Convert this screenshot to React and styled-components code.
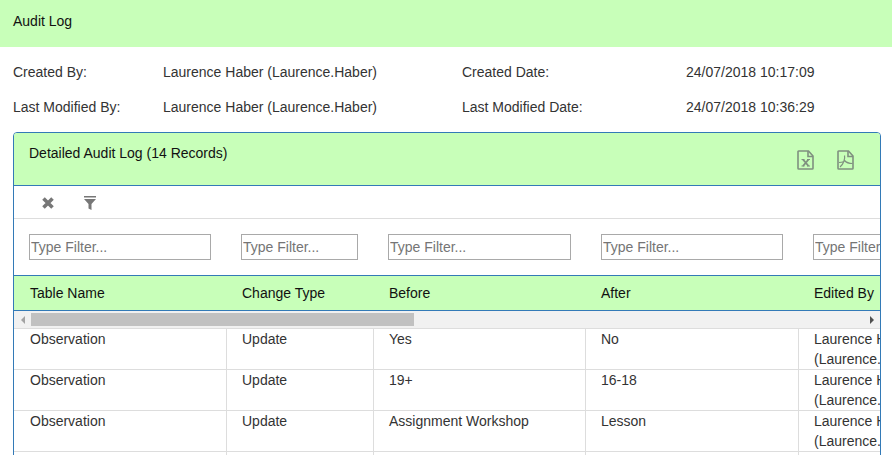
import React from 'react';
import styled, { createGlobalStyle } from 'styled-components';

const GREEN = '#c8ffb9';
const BLUE = '#337ab7';

const GlobalStyle = createGlobalStyle`
  html, body {
    margin: 0;
    padding: 0;
    background: #fff;
    font-family: "Liberation Sans", Arial, sans-serif;
    font-size: 14px;
    color: #333;
  }
`;

const Page = styled.div`
  height: 455px;
  overflow: hidden;
`;

const TopBar = styled.div`
  height: 47px;
  padding: 13px 13px 0;
  box-sizing: border-box;
  background: ${GREEN};
  color: #111;
  line-height: 16px;
`;

const InfoGrid = styled.div`
  display: grid;
  grid-template-columns: 150px 299px 224px 1fr;
  grid-auto-rows: 35px;
  padding: 8px 13px 0;
  line-height: 35px;
`;

const Panel = styled.div`
  margin: 7px 11px 0 13px;
  border: 1px solid ${BLUE};
  border-radius: 4px 4px 0 0;
  overflow: hidden;
`;

const PanelHeader = styled.div`
  display: flex;
  justify-content: space-between;
  height: 53px;
  padding: 12px 0 0 15px;
  box-sizing: border-box;
  background: ${GREEN};
  border-bottom: 1px solid ${BLUE};
  color: #111;
  line-height: 16px;
`;

const ExportIcons = styled.div`
  display: flex;
  gap: 22px;
  padding: 5px 25px 0 0;
`;

const Toolbar = styled.div`
  display: flex;
  align-items: center;
  gap: 28px;
  height: 33px;
  padding: 2px 0 0 27px;
  box-sizing: border-box;
  border-bottom: 1px solid #ddd;
`;

const ToolButton = styled.span`
  display: flex;
  justify-content: center;
  width: 14px;
`;

const Scroller = styled.div`
  overflow: hidden;
`;

const Row = styled.div`
  display: grid;
  grid-template-columns: ${(p) => p.$columns || '212px 147px 212px 213px 300px'};
  width: 1084px;
`;

const FilterCell = styled.div`
  height: 56px;
  padding: 15px 15px 0;
  box-sizing: border-box;
`;

const FilterInput = styled.input`
  display: block;
  width: 100%;
  height: 26px;
  padding: 0 1px;
  box-sizing: border-box;
  border: 1px solid #a9a9a9;
  font: 14px "Liberation Sans", Arial, sans-serif;
  outline: none;
  &::placeholder {
    color: #757575;
    opacity: 1;
  }
`;

const HeadRow = styled.div`
  border-top: 1px solid ${BLUE};
  border-bottom: 1px solid ${BLUE};
  background: ${GREEN};
`;

const HeadCell = styled.div`
  height: 34px;
  padding-left: 16px;
  color: #111;
  line-height: 34px;
`;

const ScrollTrack = styled.div`
  display: flex;
  align-items: center;
  height: 17px;
  background: #f1f1f1;
`;

const ScrollArrow = styled.span`
  flex: none;
  width: 17px;
  height: 0;
  display: flex;
  justify-content: center;
  &::before {
    content: '';
    margin-top: -4px;
    border-top: 4px solid transparent;
    border-bottom: 4px solid transparent;
    ${(p) => (p.$right ? 'border-left: 4px solid #505050;' : 'border-right: 4px solid #a3a3a3;')}
  }
`;

const ScrollThumb = styled.div`
  width: 383px;
  height: 13px;
  background: #c1c1c1;
`;

const ScrollGap = styled.div`
  flex: 1;
`;

const BodyRow = styled(Row)`
  border-top: 1px solid #ddd;
`;

const BodyCell = styled.div`
  height: 40px;
  padding: 0 0 0 ${(p) => (p.$first ? '16px' : '15px')};
  border-left: ${(p) => (p.$first ? 'none' : '1px solid #ddd')};
  line-height: 20px;
  overflow: hidden;
`;

const FileIcon = ({ children }) => (
  <svg width="18" height="20" viewBox="0 0 18 20" fill="none" stroke="#7f907f" strokeWidth="1.6">
    <path d="M1.700 1h9.800l4.500 5v12.200c0 .5-.3.8-.8.8H1.700c-.5 0-.7-.3-.7-.8V1.800c0-.5.2-.8.7-.8z" />
    <path d="M11 1v5.500h5" />
    {children}
  </svg>
);

const columns = ['Table Name', 'Change Type', 'Before', 'After', 'Edited By'];

const rows = [
  ['Observation', 'Update', 'Yes', 'No'],
  ['Observation', 'Update', '19+', '16-18'],
  ['Observation', 'Update', 'Assignment Workshop', 'Lesson'],
  ['Observation', 'Update', '', ''],
];

export default function App() {
  return (
    <Page>
      <GlobalStyle />
      <TopBar>Audit Log</TopBar>
      <InfoGrid>
        <span>Created By:</span>
        <span>Laurence Haber (Laurence.Haber)</span>
        <span>Created Date:</span>
        <span>24/07/2018 10:17:09</span>
        <span>Last Modified By:</span>
        <span>Laurence Haber (Laurence.Haber)</span>
        <span>Last Modified Date:</span>
        <span>24/07/2018 10:36:29</span>
      </InfoGrid>
      <Panel>
        <PanelHeader>
          Detailed Audit Log (14 Records)
          <ExportIcons>
            <FileIcon>
              <path d="M6 9.500l5.500 6.500M11.500 9.500L6 16" strokeWidth="1.900" />
              <path d="M4.500 9.500h3M10 9.500h3M4.500 16h3M10 16h3" strokeWidth="1" />
            </FileIcon>
            <FileIcon>
              <path d="M7.500 5.500c.8 3.500-1 8.500-4.500 11.500M7.500 10.500c1.800 2 4.500 3 8 3M7.300 11.500c-1.500 .5-3.200 1-5.300 1" strokeWidth="1.200" />
            </FileIcon>
          </ExportIcons>
        </PanelHeader>
        <Toolbar>
          <ToolButton>
            <svg width="14" height="14" viewBox="0 0 14 14" fill="none" stroke="#777" strokeWidth="3.600">
              <path d="M2.500 2.500l9 9M11.500 2.500l-9 9" />
            </svg>
          </ToolButton>
          <ToolButton>
            <svg width="14" height="14" viewBox="0 0 14 14" fill="#777">
              <path d="M1 0h12v1.500H1zM1 3h12L8.500 8v6l-3-1.500V8z" />
            </svg>
          </ToolButton>
        </Toolbar>
        <Scroller>
          <Row $columns="212px 147px 213px 212px 300px">
            {columns.map((c) => (
              <FilterCell key={c}>
                <FilterInput placeholder="Type Filter..." />
              </FilterCell>
            ))}
          </Row>
          <HeadRow>
            <Row>
              {columns.map((c) => (
                <HeadCell key={c}>{c}</HeadCell>
              ))}
            </Row>
          </HeadRow>
          <ScrollTrack>
            <ScrollArrow />
            <ScrollThumb />
            <ScrollGap />
            <ScrollArrow $right />
          </ScrollTrack>
          {rows.map((r, i) => (
            <BodyRow key={i}>
              {r.map((v, j) => (
                <BodyCell key={j} $first={j === 0}>
                  {v}
                </BodyCell>
              ))}
              <BodyCell>
                Laurence Haber
                <br />
                (Laurence.Haber)
              </BodyCell>
            </BodyRow>
          ))}
        </Scroller>
      </Panel>
    </Page>
  );
}
